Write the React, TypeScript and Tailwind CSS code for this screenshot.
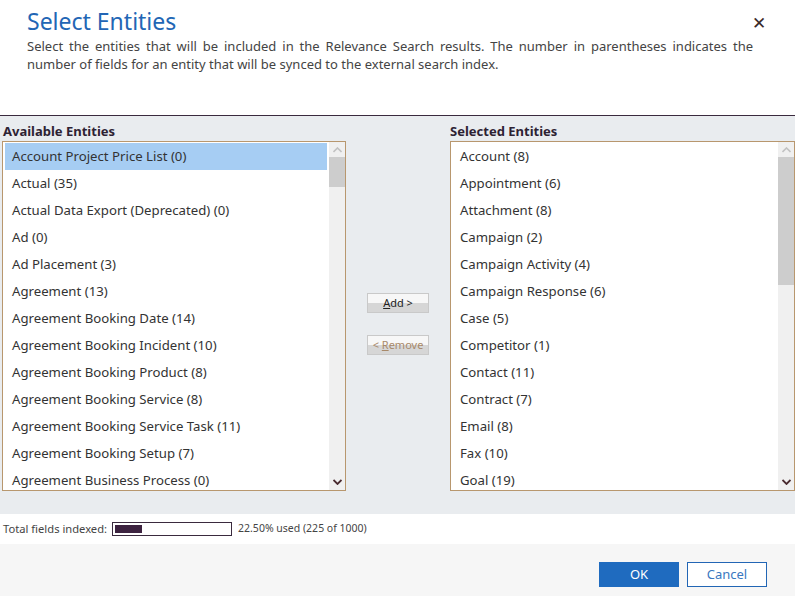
import React from "react";

const left = [
  "Account Project Price List (0)",
  "Actual (35)",
  "Actual Data Export (Deprecated) (0)",
  "Ad (0)",
  "Ad Placement (3)",
  "Agreement (13)",
  "Agreement Booking Date (14)",
  "Agreement Booking Incident (10)",
  "Agreement Booking Product (8)",
  "Agreement Booking Service (8)",
  "Agreement Booking Service Task (11)",
  "Agreement Booking Setup (7)",
  "Agreement Business Process (0)",
];

const right = [
  "Account (8)",
  "Appointment (6)",
  "Attachment (8)",
  "Campaign (2)",
  "Campaign Activity (4)",
  "Campaign Response (6)",
  "Case (5)",
  "Competitor (1)",
  "Contact (11)",
  "Contract (7)",
  "Email (8)",
  "Fax (10)",
  "Goal (19)",
];

function Scrollbar({ thumb }: { thumb: number }) {
  return (
    <div className="flex w-[16px] shrink-0 flex-col bg-[#f0f0f0]">
      <div className="flex h-[15px] items-center justify-center">
        <svg width="9" height="6" viewBox="0 0 9 6">
          <path d="M0.5 5 L4.5 1 L8.5 5" stroke="#c2c2c2" strokeWidth="1.6" fill="none" />
        </svg>
      </div>
      <div className="bg-[#cdcdcd]" style={{ height: thumb }} />
      <div className="flex-1" />
      <div className="flex h-[16px] items-center justify-center">
        <svg width="9" height="6" viewBox="0 0 9 6">
          <path d="M0.5 1 L4.5 5 L8.5 1" stroke="#4a2b30" strokeWidth="1.8" fill="none" />
        </svg>
      </div>
    </div>
  );
}

function ListBox({ items, selectedFirst, thumb }: { items: string[]; selectedFirst?: boolean; thumb: number }) {
  return (
    <div className="flex h-[350px] border border-[#b8976e] bg-white">
      <div className="flex-1 overflow-hidden pt-[1px] pl-[2px] pr-[2px]">
        {items.map((t, i) => (
          <div
            key={t}
            className={
              "flex h-[27px] items-center whitespace-nowrap pl-[7px] text-[13.2px] text-[#333333] " +
              (selectedFirst && i === 0 ? "bg-[#a6cdf3]" : "")
            }
          >
            {t}
          </div>
        ))}
      </div>
      <Scrollbar thumb={thumb} />
    </div>
  );
}

export default function App() {
  return (
    <div
      className="flex h-[596px] w-[795px] flex-col overflow-hidden bg-white"
      style={{ fontFamily: '"Noto Sans", "Open Sans", sans-serif' }}
    >
      {/* Header */}
      <div className="relative h-[116px] shrink-0 border-b border-[#3a2a3e] px-[27px] pt-[4px]">
        <div className="text-[23px] leading-[34px] text-[#2266b5]">Select Entities</div>
        <p className="mt-[-1px] w-[726px] text-justify text-[13px] leading-[18px] text-[#444444]">
          Select the entities that will be included in the Relevance Search results. The number in parentheses
          indicates the number of fields for an entity that will be synced to the external search index.
        </p>
        <div className="absolute left-[752px] top-[14px] text-[17px] leading-none text-[#3a2a2a]">✕</div>
      </div>

      {/* Body */}
      <div className="flex h-[398px] shrink-0 bg-[#e9ecef] pt-[6px]">
        <div className="ml-[2px] flex w-[344px] flex-col">
          <div className="pl-[1px] text-[13px] font-bold leading-[18px] text-[#2d2233]">Available Entities</div>
          <div className="mt-[1px]">
            <ListBox items={left} selectedFirst thumb={30} />
          </div>
        </div>
        <div className="flex w-[104px] flex-col items-center pt-[171px]">
          <button className="h-[20px] w-[62px] border border-[#c9c9c9] bg-[linear-gradient(#f7f7f7_0%,#f7f7f7_50%,#d6d6d6_50%,#d6d6d6_100%)] text-[11px] leading-[16px] text-[#222222]">
            <span className="underline">A</span>dd &gt;
          </button>
          <button className="mt-[22px] h-[20px] w-[62px] border border-[#c9c9c9] bg-[linear-gradient(#f7f7f7_0%,#f7f7f7_50%,#d6d6d6_50%,#d6d6d6_100%)] text-[11px] leading-[16px] text-[#a8896a]">
            &lt; <span className="underline">R</span>emove
          </button>
        </div>
        <div className="flex w-[345px] flex-col">
          <div className="text-[13px] font-bold leading-[18px] text-[#2d2233]">Selected Entities</div>
          <div className="mt-[1px]">
            <ListBox items={right} thumb={128} />
          </div>
        </div>
      </div>

      {/* Usage */}
      <div className="flex h-[30px] shrink-0 items-center pl-[3px] text-[11.2px] text-[#444444]">
        <span>Total fields indexed:</span>
        <div className="ml-[5px] h-[14px] w-[120px] border border-[#3a2a3e] bg-white p-[2px]">
          <div className="h-full bg-[#3d2340]" style={{ width: "24%" }} />
        </div>
        <span className="ml-[6px] text-[10.5px]">22.50% used (225 of 1000)</span>
      </div>

      {/* Footer */}
      <div className="flex flex-1 items-start justify-end bg-[#f6f6f6] pr-[28px] pt-[18px]">
        <button className="h-[25px] w-[80px] bg-[#1f6bbf] text-[13px] text-white">OK</button>
        <button className="ml-[8px] h-[25px] w-[80px] border border-[#2266b5] bg-white text-[13px] text-[#3a78c0]">
          Cancel
        </button>
      </div>
    </div>
  );
}
